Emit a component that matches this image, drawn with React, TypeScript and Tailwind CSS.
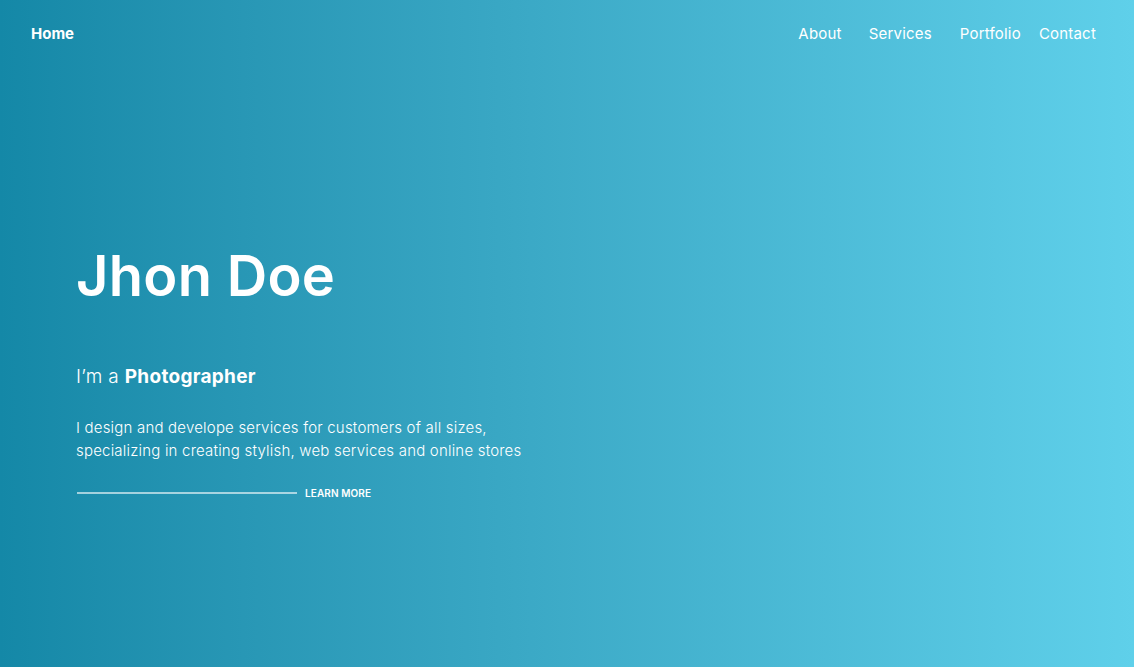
import React from "react";

export default function App() {
  return (
    <div
      className="w-[1134px] h-[667px] overflow-hidden text-white bg-gradient-to-r from-[#1488a7] to-[#5fd0ea] flex flex-col"
      style={{ fontFamily: "Inter, 'Open Sans', sans-serif" }}
    >
      <header className="flex items-center justify-between h-[68px] pl-[31px] pr-[38px]">
        <a className="text-[15px] font-bold">Home</a>
        <nav className="flex items-center text-[15px] font-normal tracking-[0.2px]">
          <a className="mr-[27px]">About</a>
          <a className="mr-[28px]">Services</a>
          <a className="mr-[18px]">Portfolio</a>
          <a>Contact</a>
        </nav>
      </header>
      <main className="pl-[76px] pt-[180px] flex flex-col">
        <h1 className="text-[56px] font-semibold leading-none tracking-[0.3px]">Jhon Doe</h1>
        <p className="mt-[59px] text-[19px] font-light tracking-[0.3px]">
          I’m a <span className="font-bold">Photographer</span>
        </p>
        <p className="mt-[24px] text-[15px] leading-[23px] font-light max-w-[480px] tracking-[0.2px]">
          I design and develope services for customers of all sizes, specializing in creating stylish, web services and online stores
        </p>
        <div className="mt-[24px] flex items-center">
          <div className="w-[220px] h-[2px] bg-white/60 ml-[1px]" />
          <span className="ml-[8px] text-[10px] font-semibold tracking-[0.1px]">LEARN MORE</span>
        </div>
      </main>
    </div>
  );
}
